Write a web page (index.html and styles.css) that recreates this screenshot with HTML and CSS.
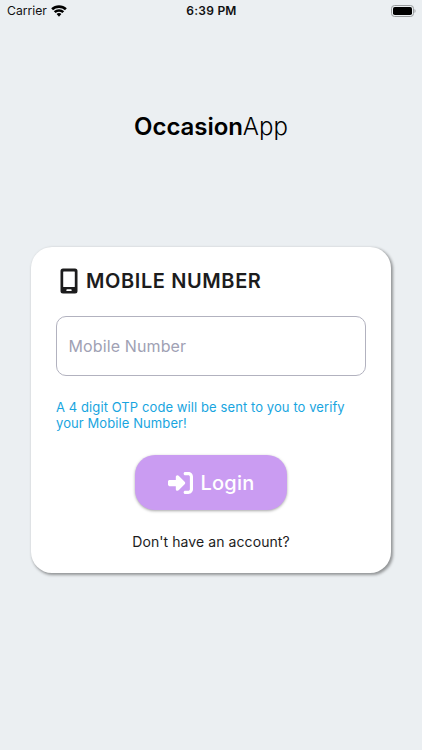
FILE: index.html
```html
<!DOCTYPE html>
<html lang="en">
<head>
<meta charset="utf-8">
<title>OccasionApp</title>
<link rel="stylesheet" href="styles.css">
</head>
<body>
<header class="status">
  <div class="carrier"><span class="carrier-name">Carrier</span>
    <svg class="wifi" viewBox="0 0 16 12"><path d="M8 .2C5 .2 2.300 1.300.2 3.300L2 5.300a8.800 8.800 0 0 1 12 0l1.800-2C13.700 1.300 11 .2 8 .2zM8 4.200c-2 0-3.800.7-5.200 2l1.800 1.900a5.200 5.200 0 0 1 6.800 0l1.800-1.900A7.500 7.500 0 0 0 8 4.200zM8 8.100c-.9 0-1.700.3-2.400.9L8 11.800 10.400 9c-.7-.6-1.500-.9-2.400-.9z"/></svg>
  </div>
  <span class="time">6:39 PM</span>
  <svg class="battery" viewBox="0 0 25 12"><rect x=".5" y=".5" width="22" height="11" rx="3" fill="none" stroke="#999c9e"/><rect x="2" y="2" width="19" height="8" rx="1.800"/><path d="M23.500 4v4c1.400-.7 1.400-3.300 0-4z" fill="#999c9e"/></svg>
</header>
<main>
  <h1 class="brand"><b>Occasion</b>App</h1>
  <section class="card">
    <h2 class="heading">
      <svg class="phone" viewBox="0 0 18 26"><path fill-rule="evenodd" d="M3 .5h12a2.500 2.500 0 0 1 2.500 2.500v20a2.500 2.500 0 0 1-2.500 2.500H3A2.500 2.500 0 0 1 .5 23V3A2.500 2.500 0 0 1 3 .5zM3.700 3.500a.5.5 0 0 0-.5.5v14.500a.5.5 0 0 0 .5.5h10.600a.5.5 0 0 0 .5-.5V4a.5.500 0 0 0-.5-.5zM7.200 21.300a.9.9 0 0 0 0 1.800h3.600a.9.9 0 0 0 0-1.800z"/></svg>
      <span class="heading-text">MOBILE NUMBER</span>
    </h2>
    <input class="field" type="text" placeholder="Mobile Number">
    <p class="hint"><span class="hint-one">A 4 digit OTP code will be sent to you to verify</span><br><span class="hint-two">your Mobile Number!</span></p>
    <button class="login"><svg class="enter" viewBox="0 32 512 448"><path d="M217.900 105.900L340.700 228.700c7.200 7.200 11.300 17.100 11.300 27.300s-4.100 20.100-11.300 27.300L217.900 406.100c-6.400 6.400-15 9.900-24 9.900-18.700 0-33.900-15.200-33.900-33.900V320H32c-17.700 0-32-14.300-32-32v-64c0-17.700 14.300-32 32-32h128v-62.100c0-18.700 15.200-33.900 33.900-33.900 9 0 17.600 3.600 24 9.900zM352 416h64c17.700 0 32-14.300 32-32V128c0-17.700-14.300-32-32-32h-64c-17.700 0-32-14.300-32-32s14.300-32 32-32h64c53 0 96 43 96 96v256c0 53-43 96-96 96h-64c-17.700 0-32-14.300-32-32s14.300-32 32-32z"/></svg><span class="login-text">Login</span></button>
    <p class="account">Don't have an account?</p>
  </section>
</main>
</body>
</html>
```
FILE: styles.css
```css
* { box-sizing: border-box; }
body { margin: 0; height: 750px; overflow: hidden; background: #ebeff2; color: #1c1c1d; font-family: Inter, sans-serif; }
h1, h2, p { margin: 0; }
span { white-space: nowrap; }
.status { height: 21px; padding: 0 6px 0 7px; display: grid; grid-template-columns: 1fr auto 1fr; align-items: center; font-size: 12px; color: #101011; }
.carrier { display: flex; align-items: center; gap: 4px; font-size: 12.2px; }
.wifi { width: 16px; height: 12px; }
.time { font-weight: 600; letter-spacing: .25px; }
.battery { width: 25px; height: 12px; justify-self: end; }
.brand { margin-top: 90px; height: 32px; line-height: 32px; text-align: center; font-size: 24px; font-weight: 300; color: #000; }
.brand b { font-weight: 600; letter-spacing: -.05px; }
.card { margin: 104px 31px 0; height: 325.500px; padding: 20px 25px 0; border-radius: 21px; background: #fff; box-shadow: 1.500px 1.500px 3px rgba(0,0,0,.38); display: flex; flex-direction: column; }
.heading { height: 28px; display: flex; align-items: center; gap: 8px; padding-left: 4px; font-size: 20px; font-weight: 600; }
.heading-text { letter-spacing: .6px; }
.phone { width: 18px; height: 26px; fill: #1c1c1d; }
.field { margin-top: 21px; width: 310px; height: 60px; padding: 0 11px 1px 11.500px; border: 1px solid #b2b2bf; border-radius: 10px; font: 16px Inter, sans-serif; letter-spacing: .12px; outline: 0; background: #fff; }
.field::placeholder { color: #a0a1b4; opacity: 1; }
.hint { margin-top: 23px; font-size: 13px; line-height: 16px; color: #18a5e0; letter-spacing: .09px; }
.login { margin-top: 24px; align-self: center; width: 152px; height: 55px; padding: 0; border: 0; border-radius: 20px; background: #ca9cf2; box-shadow: 0 1px 3px rgba(0,0,0,.35); color: #fff; display: flex; align-items: center; justify-content: center; gap: 8px; font: 500 20px Inter, sans-serif; }
.login-text { letter-spacing: .2px; }
.enter { width: 25px; height: 22px; fill: #fff; }
.account { margin-top: 23px; text-align: center; font-size: 14px; line-height: 18px; letter-spacing: .08px; }
```
